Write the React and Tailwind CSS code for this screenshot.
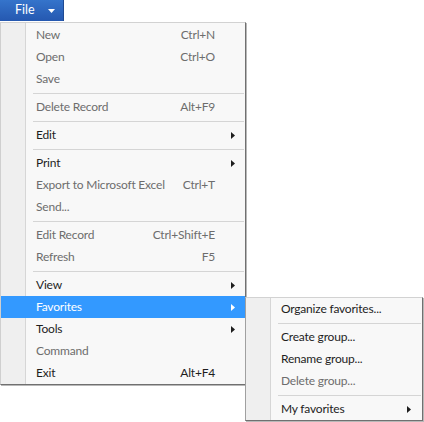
import React from 'react';

const fileItems = [
  { label: 'New', shortcut: 'Ctrl+N', dim: true },
  { label: 'Open', shortcut: 'Ctrl+O', dim: true },
  { label: 'Save', dim: true },
  { sep: true },
  { label: 'Delete Record', shortcut: 'Alt+F9', dim: true },
  { sep: true },
  { label: 'Edit', sub: true },
  { sep: true },
  { label: 'Print', sub: true },
  { label: 'Export to Microsoft Excel', shortcut: 'Ctrl+T', dim: true },
  { label: 'Send...', dim: true },
  { sep: true },
  { label: 'Edit Record', shortcut: 'Ctrl+Shift+E', dim: true },
  { label: 'Refresh', shortcut: 'F5', dim: true },
  { sep: true },
  { label: 'View', sub: true },
  { label: 'Favorites', sub: true, active: true },
  { label: 'Tools', sub: true },
  { label: 'Command', dim: true },
  { label: 'Exit', shortcut: 'Alt+F4' },
];

const favItems = [
  { label: 'Organize favorites...' },
  { sep: true },
  { label: 'Create group...' },
  { label: 'Rename group...' },
  { label: 'Delete group...', dim: true },
  { sep: true },
  { label: 'My favorites', sub: true },
];

function Arrow({ white }) {
  return (
    <svg width="4" height="7" viewBox="0 0 4 7">
      <path d="M0 0 L4 3.5 L0 7 Z" fill={white ? '#ffffff' : '#1e1e1e'} />
    </svg>
  );
}

function MenuRows({ items, arrowPad }) {
  return items.map((it, i) => {
    if (it.sep) {
      return (
        <div key={i} className="h-[6px] pt-[3px] pl-[32px] pr-[1px]">
          <div className="h-px bg-[#d5d5d5]" />
        </div>
      );
    }
    const color = it.active ? 'text-white' : it.dim ? 'text-[#6d6d6d]' : 'text-[#1e1e1e]';
    return (
      <div
        key={i}
        className={`flex h-[22px] items-center pl-[35px] ${it.active ? 'bg-[#3399ff]' : ''} ${color}`}
      >
        <span className="flex-1 whitespace-nowrap">{it.label}</span>
        {it.shortcut && <span className="whitespace-nowrap">{it.shortcut}</span>}
        <span className={`flex items-center ${arrowPad}`}>
          {it.sub && <Arrow white={it.active} />}
        </span>
      </div>
    );
  });
}

export default function App() {
  return (
    <div className="relative h-[422px] w-[424px] bg-white text-[12px] tracking-[-0.2px] font-['Lato',sans-serif]">
      <div className="flex h-[21px] w-[64px] items-center border-r border-[#1f4a92] bg-[linear-gradient(#3574cb,#2558b0)] pl-[15px] text-[12.5px] tracking-normal text-white">
        <span>File</span>
        <svg className="ml-[13px]" width="7" height="4" viewBox="0 0 7 4">
          <path d="M0 0 L7 0 L3.5 4 Z" fill="#ffffff" />
        </svg>
      </div>

      <div className="mt-[1px] w-[246px] border-l border-t border-b border-r border-l-[#cfcfcf] border-t-[#d2d2d2] border-r-[#707070] border-b-[#707070] bg-[linear-gradient(to_right,#efefef_24px,#d6d6d6_24px,#d6d6d6_25px,#f8f8f8_25px)] pt-px shadow-[1px_1px_0_#b8b8b8]">
        <MenuRows items={fileItems} arrowPad="w-[30px] pl-[16px] h-[7px]" />
      </div>

      <div className="absolute left-[245px] top-[297px] w-[178px] border border-l-[#a0a0a0] border-t-[#d2d2d2] border-r-[#707070] border-b-[#707070] bg-[linear-gradient(to_right,#efefef_24px,#d6d6d6_24px,#d6d6d6_25px,#f8f8f8_25px)] shadow-[1px_1px_0_#b8b8b8]">
        <MenuRows items={favItems} arrowPad="w-[15px] h-[7px]" />
      </div>
    </div>
  );
}
